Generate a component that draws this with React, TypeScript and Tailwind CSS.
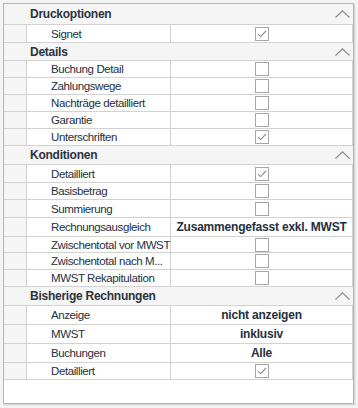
import React from "react";

type Row =
  | { kind: "header"; label: string; h: number }
  | { kind: "check"; label: string; checked: boolean; h: number }
  | { kind: "text"; label: string; value: string; h: number };

const rows: Row[] = [
  { kind: "header", label: "Druckoptionen", h: 21 },
  { kind: "check", label: "Signet", checked: true, h: 18 },
  { kind: "header", label: "Details", h: 18 },
  { kind: "check", label: "Buchung Detail", checked: false, h: 17 },
  { kind: "check", label: "Zahlungswege", checked: false, h: 17 },
  { kind: "check", label: "Nachträge detailliert", checked: false, h: 17 },
  { kind: "check", label: "Garantie", checked: false, h: 17 },
  { kind: "check", label: "Unterschriften", checked: true, h: 17 },
  { kind: "header", label: "Konditionen", h: 19 },
  { kind: "check", label: "Detailliert", checked: true, h: 18 },
  { kind: "check", label: "Basisbetrag", checked: false, h: 17 },
  { kind: "check", label: "Summierung", checked: false, h: 18 },
  { kind: "text", label: "Rechnungsausgleich", value: "Zusammengefasst exkl. MWST", h: 19 },
  { kind: "check", label: "Zwischentotal vor MWST", checked: false, h: 16 },
  { kind: "check", label: "Zwischentotal nach M...", checked: false, h: 17 },
  { kind: "check", label: "MWST Rekapitulation", checked: false, h: 17 },
  { kind: "header", label: "Bisherige Rechnungen", h: 19 },
  { kind: "text", label: "Anzeige", value: "nicht anzeigen", h: 19 },
  { kind: "text", label: "MWST", value: "inklusiv", h: 19 },
  { kind: "text", label: "Buchungen", value: "Alle", h: 19 },
  { kind: "check", label: "Detailliert", checked: true, h: 17 },
];

function Chevron() {
  return (
    <svg width="15" height="8" viewBox="0 0 15 8" className="block">
      <path d="M0.5 7.5 L7.5 0.8 L14.5 7.5" fill="none" stroke="#8c8c8c" strokeWidth="1.1" />
    </svg>
  );
}

function CheckBox({ checked }: { checked: boolean }) {
  return (
    <div className="w-[14px] h-[14px] border border-[#a6a6a6] bg-white flex items-center justify-center">
      {checked && (
        <svg width="10" height="8" viewBox="0 0 10 8" className="block">
          <path d="M1 4.2 L3.6 6.6 L9 1" fill="none" stroke="#8a8a8a" strokeWidth="1.1" />
        </svg>
      )}
    </div>
  );
}

export default function App() {
  return (
    <div
      className="w-[358px] h-[408px] bg-[#f4f4f4] pt-[3px] pl-[3px] overflow-hidden"
      style={{ fontFamily: '"Liberation Sans", Arial, sans-serif' }}
    >
      <div className="w-[351px] h-[401px] border border-[#b4b4b4] bg-white shadow-[1px_1px_0_#d6d6d6,2px_2px_0_#e8e8e8] flex flex-col overflow-hidden">
        {rows.map((r, i) => {
          if (r.kind === "header") {
            return (
              <div
                key={i}
                className="flex items-center bg-[#f5f5f5] border-b border-[#d2d2d2] pl-[26px] pr-[3px] shrink-0"
                style={{ height: r.h }}
              >
                <span className="flex-1 text-[12px] font-bold tracking-[-0.25px] text-[#2b3340] leading-[14px]">
                  {r.label}
                </span>
                <Chevron />
              </div>
            );
          }
          return (
            <div key={i} className="flex border-b border-[#d2d2d2] shrink-0" style={{ height: r.h }}>
              <div className="w-[23px] bg-[#f5f5f5] border-r border-[#d2d2d2] shrink-0" />
              <div className="w-[144px] border-r border-[#d2d2d2] shrink-0 flex items-center pl-[24px] pr-[1px]">
                <span className="text-[11.5px] tracking-[-0.4px] text-[#253040] leading-[14px] whitespace-nowrap">
                  {r.label}
                </span>
              </div>
              <div className="flex-1 flex items-center justify-center border-r border-[#d2d2d2]">
                {r.kind === "check" ? (
                  <CheckBox checked={r.checked} />
                ) : (
                  <span className="text-[12px] font-bold tracking-[-0.2px] text-[#253040] leading-[14px] whitespace-nowrap">
                    {r.value}
                  </span>
                )}
              </div>
            </div>
          );
        })}
        <div className="flex-1 bg-white" />
      </div>
    </div>
  );
}
